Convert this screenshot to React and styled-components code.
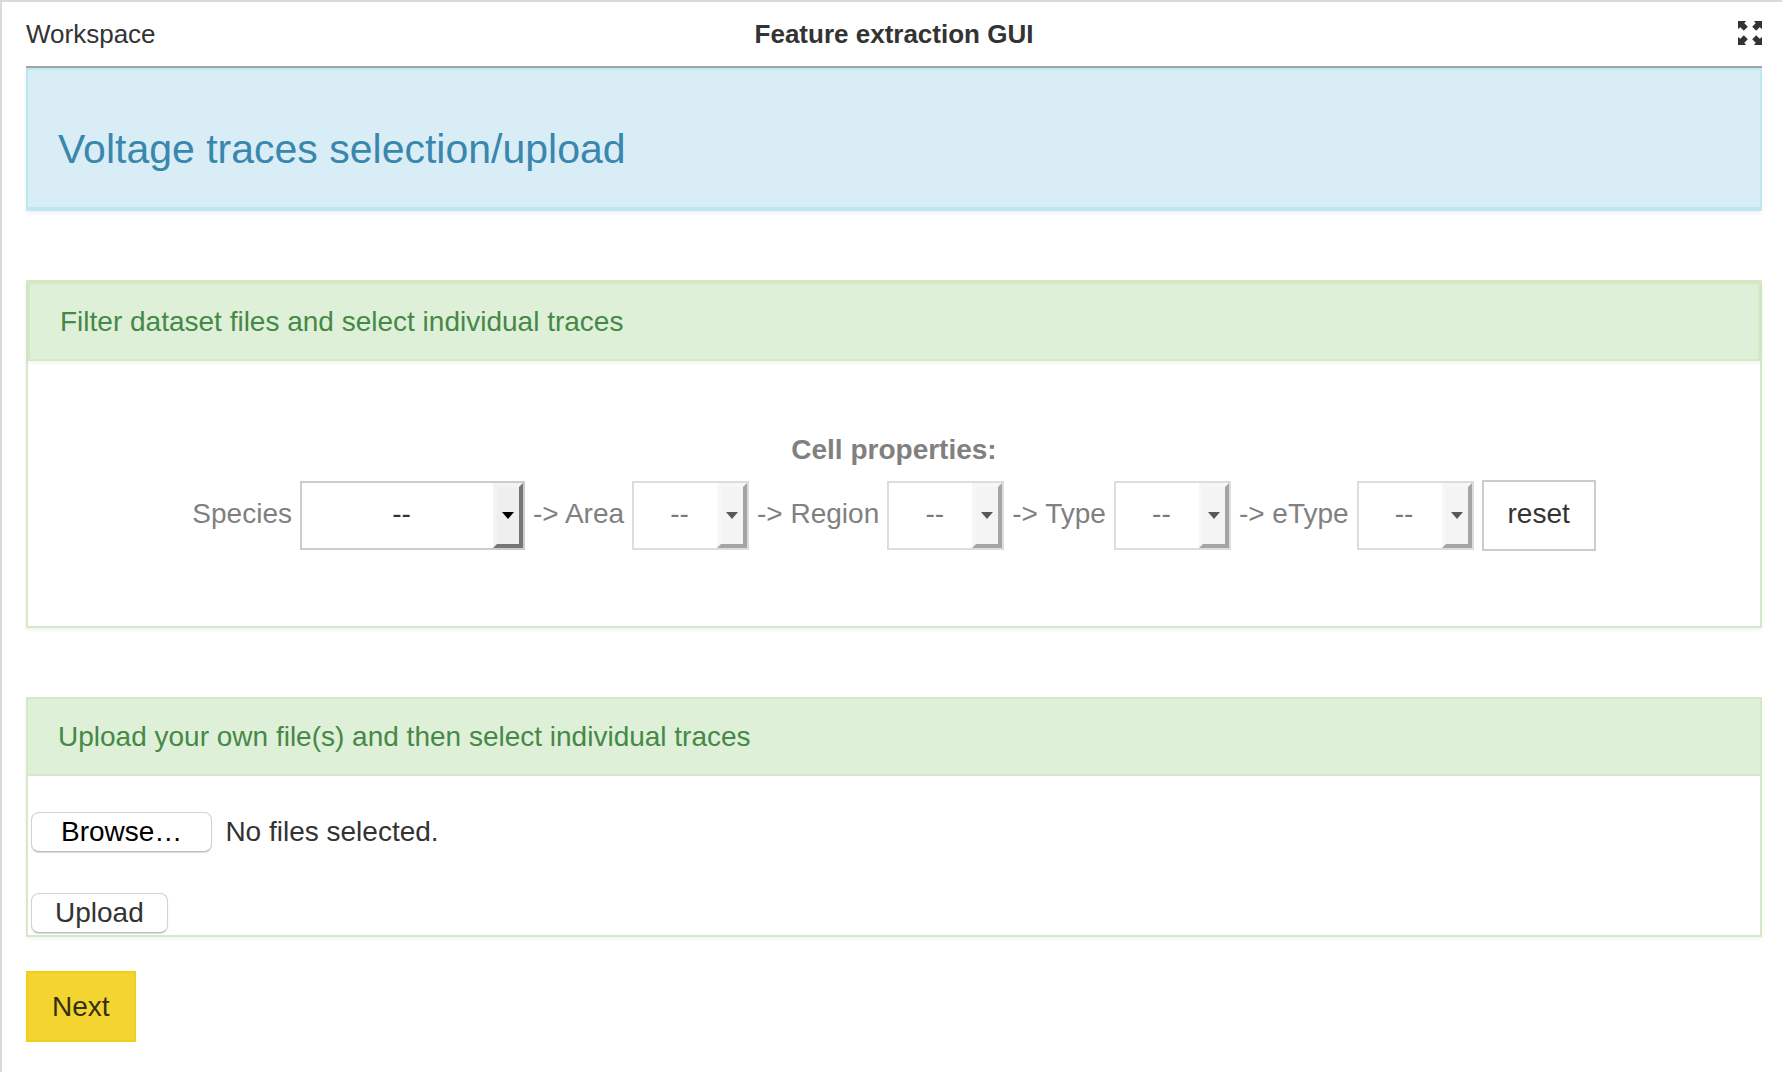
import React, { useRef, useState } from "react";
import styled, { createGlobalStyle, css } from "styled-components";

const GlobalStyle = createGlobalStyle`
  *, *::before, *::after { box-sizing: border-box; }
  html { min-height: 100%; display: grid; background: #fff; }
  body {
    margin: 0;
    border-top: 2px solid #dadada;
    border-left: 2px solid #dadada;
    font-family: "Liberation Sans", Arial, sans-serif;
    font-size: 28px;
    line-height: 40px;
    color: #333;
  }
  button, select { font: inherit; color: inherit; cursor: pointer; }
`;

const Page = styled.div`
  padding: 0 20px 30px 24px;
`;

const TopBar = styled.header`
  display: grid;
  grid-template-columns: 1fr auto 1fr;
  align-items: center;
  height: 66px;
  border-bottom: 2px solid #a3a3a3;
  font-size: 26px;
`;

const HomeLink = styled.a`
  justify-self: start;
  color: inherit;
  text-decoration: none;
`;

const AppTitle = styled.h1`
  margin: 0;
  font-size: inherit;
  font-weight: 700;
`;

const IconButton = styled.button`
  justify-self: end;
  display: flex;
  padding: 0 0 2px;
  border: 0;
  background: none;
`;

const Banner = styled.section`
  padding: 56px 30px 34px;
  border: 2px solid #bce8f1;
  border-bottom-width: 4px;
  background: #d9edf7;
  box-shadow: 0 2px 4px rgba(0, 0, 0, 0.06);
`;

const BannerTitle = styled.h2`
  margin: 0;
  font-size: 41px;
  font-weight: 300;
  line-height: 47px;
  color: #3a87ad;
`;

const Panel = styled.section`
  margin-top: 69px;
  border: 2px solid #d6e9c6;
  box-shadow: 0 2px 4px rgba(0, 0, 0, 0.06);
`;

const PanelTitle = styled.h3`
  margin: 0;
  padding: 18px 30px 17px;
  border-bottom: 2px solid #d6e9c6;
  background: #dff0d8;
  font-size: 28px;
  font-weight: 400;
  color: #468847;

  ${(p) =>
    p.$framed &&
    css`
      border: 2px solid #d6e9c6;
      box-shadow: 0 2px 4px rgba(0, 0, 0, 0.06);
    `}
`;

const Filters = styled.div`
  display: flex;
  flex-direction: column;
  align-items: center;
  gap: 10px;
  padding: 69px 0 75px;
  color: #808080;
`;

const FilterRow = styled.div`
  display: flex;
  flex-wrap: wrap;
  align-items: center;
  justify-content: center;
  gap: 8px;
`;

const FilterLabel = styled.label`
  padding-bottom: 4px;
`;

const SelectBox = styled.span`
  position: relative;
  display: flex;
  width: ${(p) => (p.$wide ? "225px" : "117px")};
  opacity: ${(p) => (p.$disabled ? 0.65 : 1)};
`;

const Select = styled.select`
  appearance: none;
  width: 100%;
  height: 69px;
  padding: 0 30px 4px 8px;
  border: 2px solid #ccc;
  border-radius: 0;
  background: #fff;
  color: #333;
  opacity: 1;
  text-align-last: center;
`;

const SelectArrow = styled.span`
  position: absolute;
  inset: 2px 2px 2px auto;
  display: flex;
  align-items: center;
  justify-content: center;
  width: 30px;
  border: 4px solid;
  border-color: #f3f3f3 #767676 #767676 #f3f3f3;
  background: #efefef;
  pointer-events: none;
`;

const ResetButton = styled.button`
  width: 114px;
  height: 71px;
  padding: 0 0 4px;
  border: 2px solid #ccc;
  background: #fff;
  color: #333;
`;

const UploadForm = styled.form`
  display: flex;
  flex-direction: column;
  align-items: flex-start;
  gap: 41px;
  padding: 36px 3px 2px;
`;

const FileRow = styled.div`
  display: flex;
  align-items: center;
  gap: 13px;
`;

const HiddenFileInput = styled.input`
  display: none;
`;

const NativeButton = styled.button`
  height: 40px;
  padding: 0 ${(p) => (p.$roomy ? "29px" : "23px")};
  border: 1px solid #d2d2d2;
  border-bottom-color: #bcbcbc;
  border-radius: 8px;
  background: #fff;
  box-shadow: 0 1px 1px rgba(0, 0, 0, 0.15);
  line-height: 38px;
  color: ${(p) => (p.$roomy ? "#000" : "#333")};
`;

const NextButton = styled.button`
  height: 71px;
  margin-top: 34px;
  padding: 0 24px;
  border: 2px solid #f1cf18;
  background: #f4d431;
  color: #333010;
`;

const FullscreenIcon = () => (
  <svg width="24" height="24" viewBox="0 0 24 24" fill="#333" aria-hidden="true">
    {[0, 90, 180, 270].map((angle) => (
      <path
        key={angle}
        transform={`rotate(${angle} 12 12)`}
        d="M0 0h8L6.300 2.300 9.800 5.800 5.800 9.800 2.300 6.300 0 8z"
      />
    ))}
  </svg>
);

const FILTERS = ["Species", "Area", "Region", "Type", "eType"];

function Filter({ name, first }) {
  const id = `filter-${name}`;
  return (
    <>
      <FilterLabel htmlFor={id}>{first ? name : `-> ${name}`}</FilterLabel>
      <SelectBox $wide={first} $disabled={!first}>
        <Select id={id} disabled={!first}>
          <option>--</option>
        </Select>
        <SelectArrow>
          <svg width="12" height="7" viewBox="0 0 12 7" aria-hidden="true">
            <path d="M0 0h12L6 7z" />
          </svg>
        </SelectArrow>
      </SelectBox>
    </>
  );
}

export default function App() {
  const fileInput = useRef(null);
  const [count, setCount] = useState(0);

  return (
    <>
      <GlobalStyle />
      <Page>
        <TopBar>
          <HomeLink href="#workspace">Workspace</HomeLink>
          <AppTitle>Feature extraction GUI</AppTitle>
          <IconButton type="button" aria-label="Fullscreen">
            <FullscreenIcon />
          </IconButton>
        </TopBar>
        <main>
          <Banner>
            <BannerTitle>Voltage traces selection/upload</BannerTitle>
          </Banner>

          <Panel>
            <PanelTitle $framed>Filter dataset files and select individual traces</PanelTitle>
            <Filters>
              <strong>Cell properties:</strong>
              <FilterRow>
                {FILTERS.map((name, i) => (
                  <Filter key={name} name={name} first={i === 0} />
                ))}
                <ResetButton type="button">reset</ResetButton>
              </FilterRow>
            </Filters>
          </Panel>

          <Panel>
            <PanelTitle>Upload your own file(s) and then select individual traces</PanelTitle>
            <UploadForm onSubmit={(e) => e.preventDefault()}>
              <FileRow>
                <HiddenFileInput
                  ref={fileInput}
                  type="file"
                  multiple
                  aria-label="Trace files"
                  onChange={(e) => setCount(e.target.files.length)}
                />
                <NativeButton type="button" $roomy onClick={() => fileInput.current.click()}>
                  Browse…
                </NativeButton>
                <span>{count ? `${count} files selected.` : "No files selected."}</span>
              </FileRow>
              <NativeButton type="submit">Upload</NativeButton>
            </UploadForm>
          </Panel>

          <NextButton type="button">Next</NextButton>
        </main>
      </Page>
    </>
  );
}
